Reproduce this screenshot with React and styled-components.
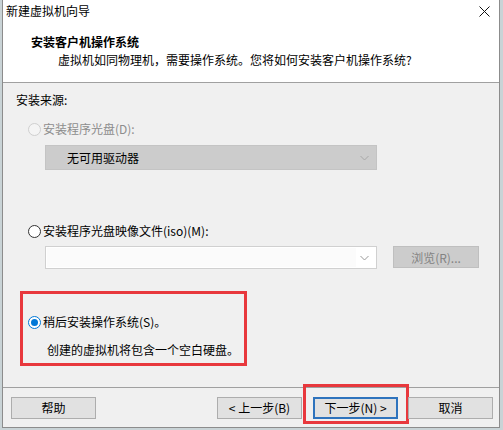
import React from "react";
import styled, { createGlobalStyle } from "styled-components";

const GlobalStyle = createGlobalStyle`
  html, body {
    margin: 0;
    padding: 0;
    background: #c9d3d6;
  }
  body {
    font-family: "Noto Sans CJK SC", "Microsoft YaHei", "Noto Sans", sans-serif;
    font-size: 12px;
    color: #000;
  }
`;

const Window = styled.div`
  margin-left: 2px;
  width: 496px;
  height: 427px;
  border: 1px solid #8c8c8c;
  border-top: none;
  background: #f0f0f0;
  display: flex;
  flex-direction: column;
`;

const TitleBar = styled.div`
  height: 22px;
  background: #fff;
  display: flex;
  align-items: center;
  justify-content: space-between;
  padding: 0 9px 2px 3px;
  line-height: 16px;
`;

const Header = styled.div`
  height: 59px;
  background: #fff;
  border-bottom: 1px solid #a0a0a0;
  padding: 9px 0 0 28px;
  box-sizing: border-box;
  display: flex;
  flex-direction: column;
`;

const HeaderTitle = styled.div`
  font-weight: 700;
  line-height: 18px;
`;

const HeaderSub = styled.div`
  line-height: 18px;
  padding-left: 27px;
`;

const Body = styled.div`
  flex: 1;
  padding: 9px 13px 0 13px;
  display: flex;
  flex-direction: column;
`;

const Label = styled.div`
  line-height: 16px;
`;

const RadioRow = styled.label`
  display: flex;
  align-items: center;
  gap: 2px;
  line-height: 16px;
  margin-left: ${({ $indent }) => $indent ?? 12}px;
  margin-top: ${({ $top }) => $top}px;
  color: ${({ $disabled }) => ($disabled ? "#8d8d8d" : "#000")};
`;

const RadioDot = styled.span`
  width: 11px;
  height: 11px;
  border-radius: 50%;
  border: 1px solid
    ${({ $checked, $disabled }) =>
      $checked ? "#0078d7" : $disabled ? "#cfcfcf" : "#333"};
  background: ${({ $disabled }) => ($disabled ? "#f4f4f4" : "#fff")};
  display: flex;
  align-items: center;
  justify-content: center;
  &::after {
    content: "";
    display: ${({ $checked }) => ($checked ? "block" : "none")};
    width: 7px;
    height: 7px;
    border-radius: 50%;
    background: #0078d7;
  }
`;

const Row = styled.div`
  display: flex;
  align-items: center;
  gap: 16px;
  margin-left: 29px;
  margin-top: ${({ $top }) => $top}px;
`;

const Combo = styled.div`
  width: 330px;
  height: ${({ $h }) => $h}px;
  display: flex;
  align-items: center;
  background: ${({ $disabled }) => ($disabled ? "#cccccc" : "#fff")};
  border: 1px solid ${({ $disabled }) => ($disabled ? "#c4c4c4" : "#d0d0d0")};
`;

const ComboText = styled.div`
  flex: 1;
  padding-left: 21px;
  line-height: 16px;
  align-self: stretch;
  display: flex;
  align-items: center;
  margin: ${({ $edit }) => ($edit ? "1px 0 1px 1px" : "0")};
  background: ${({ $edit }) => ($edit ? "#fbfbfb" : "transparent")};
`;

const Chevron = styled.svg`
  width: 17px;
  flex: none;
  margin-right: 3px;
`;

const BrowseButton = styled.div`
  width: 86px;
  height: 22px;
  box-sizing: border-box;
  background: #cccccc;
  border: 1px solid #bfbfbf;
  color: #838383;
  display: flex;
  align-items: center;
  justify-content: center;
  margin-top: -1px;
`;

const NoteBox = styled.div`
  width: 216px;
  margin-left: 4px;
  margin-top: 22px;
  border: 3px solid #e8383d;
  padding: 20px 0 5px 5px;
  display: flex;
  flex-direction: column;
`;

const NoteText = styled.div`
  line-height: 16px;
  margin: 12px 0 0 19px;
`;

const Footer = styled.div`
  height: 40px;
  border-top: 1px solid #a0a0a0;
  box-sizing: border-box;
  padding: 9px 6px 0 8px;
  display: flex;
  align-items: flex-start;
`;

const Spacer = styled.div`
  flex: 1;
`;

const Button = styled.div`
  position: relative;
  width: 85px;
  height: 22px;
  box-sizing: border-box;
  background: #e1e1e1;
  border: ${({ $primary }) => ($primary ? "2px solid #2e73bd" : "1px solid #adadad")};
  display: flex;
  align-items: center;
  justify-content: center;
  margin-left: ${({ $gap }) => $gap ?? 0}px;
  line-height: 16px;
`;

const Highlight = styled.div`
  position: absolute;
  left: -12px;
  right: -13px;
  top: -15px;
  bottom: -7px;
  border: 3px solid #e8383d;
  pointer-events: none;
`;

const ChevronIcon = ({ color }) => (
  <Chevron viewBox="0 0 17 10" height="10">
    <path d="M4.5 3 L8.5 7 L12.5 3" fill="none" stroke={color} strokeWidth="1" />
  </Chevron>
);

const Radio = ({ checked, disabled, children, top, indent }) => (
  <RadioRow $top={top} $disabled={disabled} $indent={indent}>
    <RadioDot $checked={checked} $disabled={disabled} />
    {children}
  </RadioRow>
);

export default function App() {
  return (
    <>
      <GlobalStyle />
      <Window>
        <TitleBar>
          <span>新建虚拟机向导</span>
          <svg width="11" height="11" viewBox="0 0 11 11">
            <path d="M0.5 0.5 L10.5 10.5 M10.5 0.5 L0.5 10.5" stroke="#111" strokeWidth="1" />
          </svg>
        </TitleBar>
        <Header>
          <HeaderTitle>安装客户机操作系统</HeaderTitle>
          <HeaderSub>虚拟机如同物理机，需要操作系统。您将如何安装客户机操作系统?</HeaderSub>
        </Header>
        <Body>
          <Label>安装来源:</Label>
          <Radio disabled top={13}>安装程序光盘(D):</Radio>
          <Row $top={8}>
            <Combo $disabled $h={23}>
              <ComboText>无可用驱动器</ComboText>
              <ChevronIcon color="#a8a8a8" />
            </Combo>
          </Row>
          <Radio top={53}>安装程序光盘映像文件(iso)(M):</Radio>
          <Row $top={7}>
            <Combo $h={21}>
              <ComboText $edit />
              <ChevronIcon color="#9a9a9a" />
            </Combo>
            <BrowseButton>浏览(R)...</BrowseButton>
          </Row>
          <NoteBox>
            <Radio checked indent={0}>稍后安装操作系统(S)。</Radio>
            <NoteText>创建的虚拟机将包含一个空白硬盘。</NoteText>
          </NoteBox>
        </Body>
        <Footer>
          <Button>帮助</Button>
          <Spacer />
          <Button>&lt; 上一步(B)</Button>
          <Button $primary $gap={11}>
            下一步(N) &gt;
            <Highlight />
          </Button>
          <Button $gap={10}>取消</Button>
        </Footer>
      </Window>
    </>
  );
}
